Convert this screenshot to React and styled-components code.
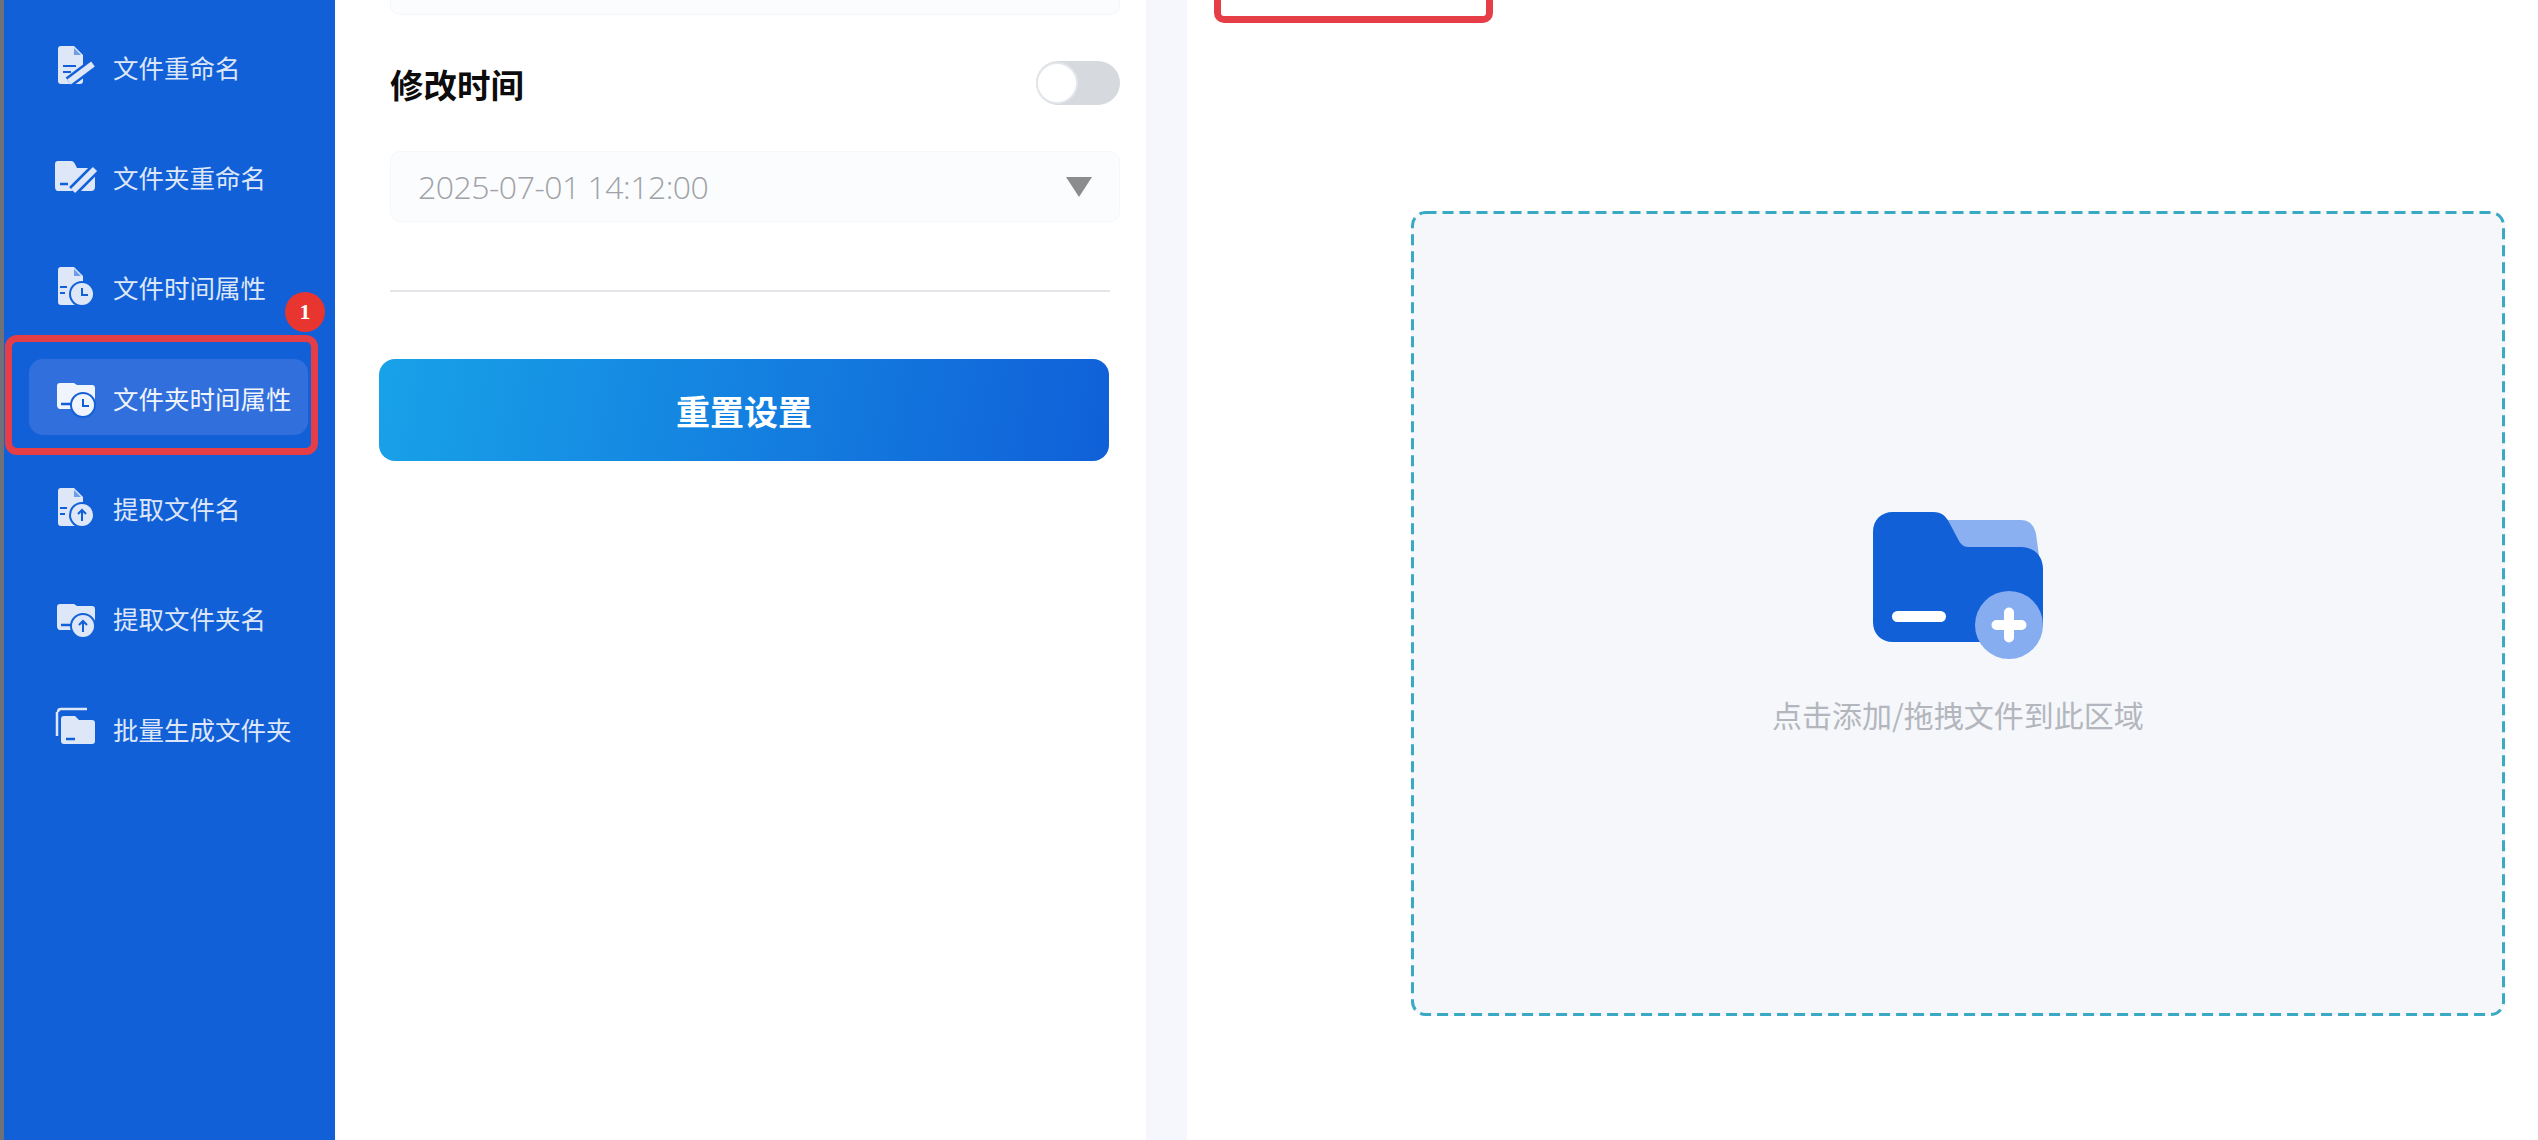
import styled, { createGlobalStyle } from 'styled-components';

const GlobalStyle = createGlobalStyle`
  html, body {
    margin: 0;
    padding: 0;
    background: #fff;
  }
  * {
    box-sizing: border-box;
  }
  body {
    font-family: "Noto Sans CJK SC", "Liberation Sans", sans-serif;
  }
`;

const Page = styled.div`
  display: flex;
  width: 2538px;
  height: 1140px;
  overflow: hidden;
  background: #fff;
`;

const Sidebar = styled.nav`
  flex: 0 0 335px;
  display: flex;
  flex-direction: column;
  gap: 34.4px;
  padding: 28px 27px 0 25px;
  background: #1260d8;
  border-left: 4px solid #6c7278;
`;

const NavItem = styled.div`
  position: relative;
  display: flex;
  align-items: center;
  gap: 15px;
  height: 76px;
  padding-left: 25px;
  border-radius: 14px;
  background: ${(p) => (p.$active ? '#316fdc' : 'transparent')};
  color: ${(p) => (p.$active ? '#f0f4fc' : '#dde7f8')};
  font-size: 25.5px;
  white-space: nowrap;
`;

const NavIcon = styled.svg`
  flex: 0 0 44px;
  width: 44px;
  height: 44px;
`;

const Highlight = styled.div`
  position: absolute;
  left: -24px;
  top: -24px;
  width: 313px;
  height: 120px;
  border: 7px solid #e53e46;
  border-radius: 12px;
  pointer-events: none;
`;

const Badge = styled.span`
  position: absolute;
  left: 256px;
  top: -67px;
  display: flex;
  align-items: center;
  justify-content: center;
  width: 40px;
  height: 40px;
  border-radius: 50%;
  background: #e8352f;
  color: #fff;
  font-family: "Liberation Serif", serif;
  font-size: 22px;
  font-weight: 700;
`;

const Settings = styled.section`
  flex: 0 0 811px;
  display: flex;
  flex-direction: column;
  padding: 0 26px 0 55px;
  background: #fff;
`;

const InputSliver = styled.div`
  height: 15px;
  background: #fbfcfe;
  border: 1px solid #f5f6f9;
  border-top: 0;
  border-radius: 0 0 10px 10px;
`;

const OptionRow = styled.div`
  display: flex;
  align-items: center;
  justify-content: space-between;
  height: 44px;
  margin-top: 46px;
`;

const OptionLabel = styled.span`
  color: #0c0c0c;
  font-size: 33.5px;
  font-weight: 700;
`;

const Toggle = styled.div`
  display: flex;
  align-items: center;
  width: 84px;
  height: 44px;
  border-radius: 22px;
  background: #d6dadf;
`;

const ToggleKnob = styled.span`
  width: 42px;
  height: 42px;
  border-radius: 50%;
  background: #fff;
  border: 2px solid #e3e6ea;
`;

const DateSelect = styled.div`
  display: flex;
  align-items: center;
  justify-content: space-between;
  height: 71px;
  margin-top: 46px;
  padding: 0 27px 0 27px;
  background: #fbfcfd;
  border: 1px solid #f6f7f9;
  border-radius: 10px;
  color: #a0a2a7;
  font-family: "Open Sans", sans-serif;
  font-size: 32px;
  font-weight: 300;
  letter-spacing: -0.5px;
`;

const Caret = styled.span`
  width: 0;
  height: 0;
  border-left: 13px solid transparent;
  border-right: 13px solid transparent;
  border-top: 20px solid #8a8c8e;
`;

const Divider = styled.hr`
  width: 720px;
  height: 2px;
  margin: 68px 0 0;
  border: 0;
  background: #e4e5e8;
`;

const ResetButton = styled.button`
  width: 730px;
  height: 102px;
  margin: 67px 0 0 -11px;
  border: 0;
  border-radius: 16px;
  background: linear-gradient(100deg, #18a2e8 0%, #1060d8 100%);
  color: #fff;
  font-family: inherit;
  font-size: 34px;
  font-weight: 700;
`;

const Gutter = styled.div`
  flex: 0 0 41px;
  background: #f5f7fc;
`;

const Workspace = styled.main`
  position: relative;
  flex: 1;
  padding: 211px 33px 0 224px;
  background: #fff;
`;

const ToolMark = styled.div`
  position: absolute;
  left: 27px;
  top: -40px;
  width: 279px;
  height: 63px;
  border: 7px solid #e53e46;
  border-radius: 10px;
`;

const DropZone = styled.div`
  position: relative;
  display: flex;
  flex-direction: column;
  align-items: center;
  height: 805px;
  padding-top: 301px;
  background: #f5f7fb;
  border-radius: 14px;
  color: #b3b6bd;
  font-size: 30px;
`;

const DashedEdge = styled.svg`
  position: absolute;
  inset: 0;
  width: 100%;
  height: 100%;
`;

const DashedRect = styled.rect`
  x: 1.5px;
  y: 1.5px;
  width: calc(100% - 3px);
  height: calc(100% - 3px);
  rx: 13px;
  fill: none;
  stroke: #3aa9c4;
  stroke-width: 3px;
  stroke-dasharray: 11 6;
`;

const DropLabel = styled.span`
  margin-top: 35px;
  line-height: 40px;
`;

const BLUE = '#1260d8';

const FOLDER = 'M4 7h13c2 0 3 1 4 3l2 4h14c2 0 4 2 4 4v15c0 2-1 4-4 4H4c-2 0-3-2-3-4V10c0-2 1-3 3-3z';
const FLAT_FOLDER = 'M6 8h14l3 2h15c2 0 3 1 3 3v17c0 2-2 4-4 4H6c-2 0-3-2-3-4V11c0-2 1-3 3-3z';
const DOC = 'M7 2h13l9 9v26c0 2-1 3-3 3H7c-2 0-3-1-3-3V5c0-2 1-3 3-3z';

const Pencil = ({ x1, y1, x2, y2 }) => (
  <>
    <line x1={x1} y1={y1} x2={x2} y2={y2} stroke={BLUE} strokeWidth="11" />
    <line x1={x1} y1={y1} x2={x2} y2={y2} stroke="currentColor" strokeWidth="6" />
  </>
);

const Dial = ({ cx, cy, r, kind }) => (
  <>
    <circle cx={cx} cy={cy} r={r + 2} fill={BLUE} />
    <circle cx={cx} cy={cy} r={r} fill="currentColor" />
    {kind === 'clock' ? (
      <path
        d={`M${cx} ${cy - 6}v7h6`}
        fill="none"
        stroke={BLUE}
        strokeWidth="2"
      />
    ) : (
      <path
        d={`M${cx} ${cy + 6}v-11M${cx - 4} ${cy - 1}l4-4 4 4`}
        fill="none"
        stroke={BLUE}
        strokeWidth="2"
      />
    )}
  </>
);

const DocRename = () => (
  <>
    <path d={DOC} fill="currentColor" />
    <path d="M20 4l7 7h-7z" fill={BLUE} opacity="0.55" />
    <path d="M9 22h13M9 28h8" stroke={BLUE} strokeWidth="2" />
    <Pencil x1={15} y1={38} x2={39} y2={20} />
  </>
);

const FolderRename = () => (
  <>
    <path d={FOLDER} fill="currentColor" />
    <path d="M6 30h8" stroke={BLUE} strokeWidth="2.5" />
    <Pencil x1={19} y1={37} x2={41} y2={15} />
  </>
);

const DocDial = ({ kind }) => (
  <>
    <path d={DOC} fill="currentColor" />
    <path d="M20 4l7 7h-7z" fill={BLUE} opacity="0.55" />
    <path d="M6 22h7M6 28h5" stroke={BLUE} strokeWidth="2" />
    <Dial cx={28} cy={29} r={11} kind={kind} />
  </>
);

const FolderDial = ({ kind }) => (
  <>
    <path d={FLAT_FOLDER} fill="currentColor" />
    <path d="M7 29h10" stroke={BLUE} strokeWidth="2.5" />
    <Dial cx={29} cy={30} r={11} kind={kind} />
  </>
);

const FolderStack = () => (
  <>
    <path d="M4 6c0-2 1-3 3-3h26" fill="none" stroke="currentColor" strokeWidth="2.5" />
    <path d="M3 6v24" fill="none" stroke="currentColor" strokeWidth="2.5" />
    <path d="M10 10h11l4 4h13c2 0 3 1 3 3v18c0 2-1 3-3 3H10c-2 0-3-1-3-3V13c0-2 1-3 3-3z" fill="currentColor" />
    <path d="M12 33h9" stroke={BLUE} strokeWidth="2.5" />
  </>
);

const navItems = [
  { label: '文件重命名', icon: <DocRename /> },
  { label: '文件夹重命名', icon: <FolderRename /> },
  { label: '文件时间属性', icon: <DocDial kind="clock" /> },
  { label: '文件夹时间属性', icon: <FolderDial kind="clock" />, active: true },
  { label: '提取文件名', icon: <DocDial kind="upload" /> },
  { label: '提取文件夹名', icon: <FolderDial kind="upload" /> },
  { label: '批量生成文件夹', icon: <FolderStack /> },
];

const AddFolderIcon = () => (
  <svg width="170" height="147" viewBox="0 0 170 147">
    <path d="M70 8h78c8 0 13 5 15 14l3 22H80z" fill="#8bb0f2" />
    <path
      d="M20 0h40c9 0 13 4 17 12l9 17c3 5 6 6 11 6h51c13 0 22 9 22 22v53c0 12-9 20-22 20H20c-12 0-20-8-20-20V20C0 8 8 0 20 0z"
      fill="#1260d8"
    />
    <rect x="19" y="99" width="54" height="11" rx="5.5" fill="#fff" />
    <circle cx="136" cy="113" r="34" fill="#86adf0" />
    <path d="M123.500 113h25M136 100.500v25" stroke="#fff" strokeWidth="10" strokeLinecap="round" />
  </svg>
);

const App = () => (
  <Page>
    <GlobalStyle />
    <Sidebar>
      {navItems.map((item) => (
        <NavItem key={item.label} $active={item.active}>
          <NavIcon viewBox="0 0 44 44">{item.icon}</NavIcon>
          {item.label}
          {item.active && (
            <>
              <Highlight />
              <Badge>1</Badge>
            </>
          )}
        </NavItem>
      ))}
    </Sidebar>
    <Settings>
      <InputSliver />
      <OptionRow>
        <OptionLabel>修改时间</OptionLabel>
        <Toggle>
          <ToggleKnob />
        </Toggle>
      </OptionRow>
      <DateSelect>
        2025-07-01 14:12:00
        <Caret />
      </DateSelect>
      <Divider />
      <ResetButton>重置设置</ResetButton>
    </Settings>
    <Gutter />
    <Workspace>
      <ToolMark />
      <DropZone>
        <DashedEdge>
          <DashedRect />
        </DashedEdge>
        <AddFolderIcon />
        <DropLabel>点击添加/拖拽文件到此区域</DropLabel>
      </DropZone>
    </Workspace>
  </Page>
);

export default App;
